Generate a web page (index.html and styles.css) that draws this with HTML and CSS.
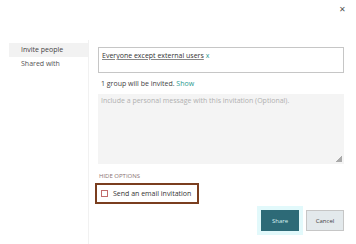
FILE: index.html
```html
<!DOCTYPE html>
<html lang="en">
<head>
<meta charset="utf-8">
<title>Share</title>
<link rel="stylesheet" href="styles.css">
</head>
<body>
<div class="dialog">
  <div class="topbar"><span class="close">&#x2715;</span></div>
  <div class="body">
    <nav class="nav">
      <div class="nav-item active">Invite people</div>
      <div class="nav-item">Shared with</div>
    </nav>
    <main class="content">
      <div class="picker"><span class="token">Everyone except external users</span><span class="token-x">x</span></div>
      <p class="note">1 group will be invited. <span class="link">Show</span></p>
      <div class="message"><span class="placeholder">Include a personal message with this invitation (Optional).</span><span class="grip"></span></div>
      <div class="hide">HIDE OPTIONS</div>
      <div class="highlight">
        <label class="check"><span class="box"></span>Send an email invitation</label>
      </div>
      <div class="actions">
        <button class="btn share">Share</button>
        <button class="btn cancel">Cancel</button>
      </div>
    </main>
  </div>
</div>
</body>
</html>
```
FILE: styles.css
```css
* { box-sizing: border-box; }
html, body { margin: 0; padding: 0; background: #fff; }
body {
  font-family: "Open Sans", "Noto Sans", sans-serif;
  font-size: 7px;
  color: #333;
  width: 356px;
  height: 244px;
  overflow: hidden;
}
.topbar {
  height: 40px;
  display: flex;
  justify-content: flex-end;
  padding: 4px 10px 0 0;
}
.close {
  font-size: 7.5px;
  color: #555;
  line-height: 10px;
}
.body {
  display: flex;
  height: 204px;
}
.nav {
  margin-left: 9px;
  width: 80px;
  padding-top: 3px;
  border-right: 1px solid #f1f1f1;
}
.nav-item {
  height: 14px;
  line-height: 14px;
  padding-left: 12px;
  color: #555;
}
.nav-item.active {
  background: #f2f2f2;
  color: #444;
}
.content {
  flex: 1;
  padding: 7px 12px 0 9px;
}
.picker {
  height: 26px;
  border: 1px solid #c6c6c6;
  padding: 3px 3px;
  line-height: 10px;
  color: #333;
}
.token { text-decoration: underline; text-decoration-color: #888; }
.token-x { color: #2b9a8f; margin-left: 2px; }
.note {
  margin: 6px 0 0 3px;
  line-height: 10px;
  color: #444;
}
.link { color: #2b9a8f; }
.message {
  position: relative;
  margin-top: 5px;
  height: 70px;
  background: #f4f4f4;
  padding: 3px 3px;
  line-height: 8px;
}
.placeholder { color: #b0b0b0; }
.grip {
  position: absolute;
  right: 2px;
  bottom: 2px;
  width: 6px;
  height: 6px;
  background: linear-gradient(135deg, transparent 50%, #aaa 50%);
}
.hide {
  margin-top: 8px;
  padding-left: 1px;
  font-size: 6px;
  line-height: 8px;
  color: #8a7474;
}
.highlight {
  position: relative;
  margin: 3px 0 0 -3px;
  width: 104px;
  height: 21px;
  border: 2px solid #7a3e1f;
  display: flex;
  align-items: center;
  padding-left: 4px;
}
.highlight::before {
  content: "";
  position: absolute;
  top: -7px;
  bottom: -5px;
  left: -17px;
  right: -11px;
  background: #fdf0f7;
  z-index: -1;
}
.check {
  display: flex;
  align-items: center;
  gap: 5px;
  color: #333;
  font-size: 7px;
}
.box {
  width: 7px;
  height: 7px;
  border: 1px solid #c26c6c;
  background: #fff;
}
.actions {
  margin-top: 6px;
  display: flex;
  justify-content: flex-end;
  gap: 7px;
}
.btn {
  width: 38px;
  height: 21px;
  font-family: inherit;
  font-size: 6px;
  padding: 0;
  border: 1px solid #c6c6c6;
}
.share {
  background: #2d6a77;
  border-color: #2d6a77;
  color: #d8f2f2;
  box-shadow: 0 0 0 4px #e2f9fb;
}
.cancel {
  background: #e3e9ec;
  color: #444;
}
```
